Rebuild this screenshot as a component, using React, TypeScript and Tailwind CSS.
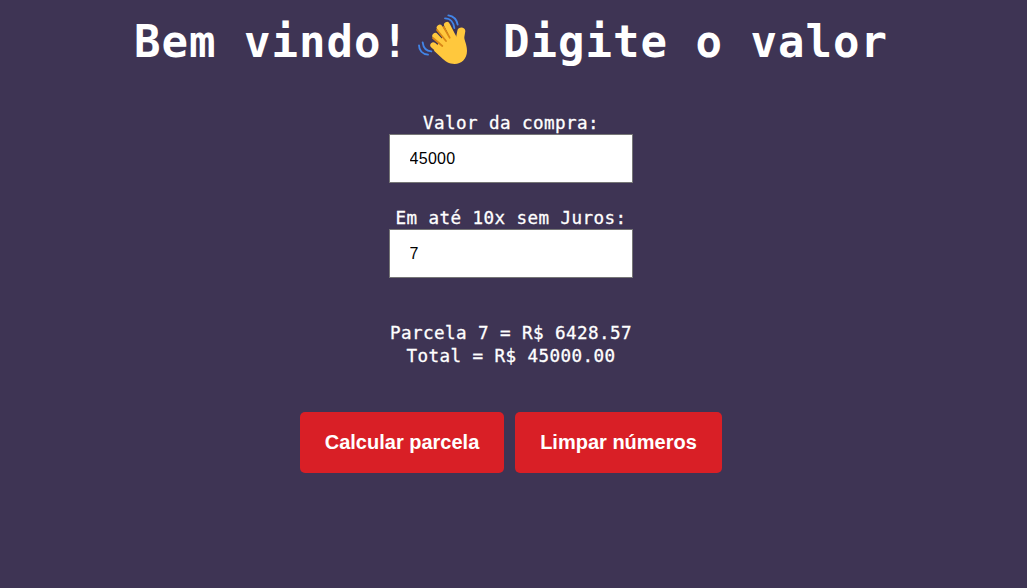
import { useState } from "react";

function WavingHand() {
  return (
    <svg
      viewBox="0 0 195 192"
      className="ml-[0.5px] mr-px h-16 w-[65px] shrink-0"
      fill="none"
      strokeLinecap="round"
      strokeLinejoin="round"
      aria-hidden="true"
    >
      <g stroke="#4285e8" strokeWidth="5.5">
        <path d="M115 22C129 24 140 33 143 50" />
        <path d="M105 31C121 31 131 43 133 60" />
        <path d="M27 112C27 127 37 139 54 140" />
        <path d="M38 103C40 120 49 129 64 130" />
      </g>
      <g stroke="#ffc83d" strokeWidth="18">
        <path d="M111 51L132 92" />
        <path d="M89 59L120 105" />
        <path d="M76 84L110 120" />
        <path d="M70 112L102 140" />
      </g>
      <path
        d="M100 84L126 74L138 89L142 68C144 55 166 55 166 69L163 87C162 97 171 108 171 128C171 153 154 167 134 168C117 168 106 161 93 148L72 128L84 108Z"
        fill="#ffc83d"
      />
      <g stroke="#d98716" strokeWidth="5.5">
        <path d="M101 57L119 89" />
        <path d="M81 66L108 99" />
        <path d="M69 90L97 114" />
      </g>
    </svg>
  );
}

function Field({
  id,
  label,
  value,
  onChange,
}: {
  id: string;
  label: string;
  value: string;
  onChange: (value: string) => void;
}) {
  return (
    <div className="flex flex-col items-center">
      <label
        htmlFor={id}
        className="h-[22px] leading-[23px] [-webkit-text-stroke:0.3px_white]"
      >
        {label}
      </label>
      <input
        id={id}
        value={value}
        onChange={(e) => onChange(e.target.value)}
        className="h-[49px] w-[244px] border border-[#767676] bg-white px-[19.5px] font-['Liberation_Sans',sans-serif] text-base tracking-[0.3px] text-black outline-none"
      />
    </div>
  );
}

const buttonClass =
  "h-[61px] rounded-[5px] bg-[#d91f26] pb-0.5 font-['Liberation_Sans',sans-serif] text-[20px] font-bold tracking-normal text-white";

export default function App() {
  const [valor, setValor] = useState("45000");
  const [parcelas, setParcelas] = useState("7");
  const [result, setResult] = useState<string[]>([
    "Parcela 7 = R$ 6428.57",
    "Total = R$ 45000.00",
  ]);

  const calcular = () => {
    const total = Number(valor);
    const n = Number(parcelas);
    if (!total || !n) return;
    setResult([
      `Parcela ${n} = R$ ${(total / n).toFixed(2)}`,
      `Total = R$ ${total.toFixed(2)}`,
    ]);
  };

  const limpar = () => {
    setValor("");
    setParcelas("");
    setResult([]);
  };

  return (
    <main className="flex min-h-screen flex-col items-center bg-[#3e3454] pr-[5px] font-['DejaVu_Sans_Mono',monospace] text-[17.6px] tracking-[0.405px] text-white">
      <h1 className="flex h-[72px] items-end text-[44px] font-bold leading-[60px] tracking-[1.01px] whitespace-pre">
        <span>Bem vindo!</span>
        <WavingHand />
        <span> Digite o valor</span>
      </h1>
      <section className="mt-10 flex flex-col gap-6">
        <Field id="valor" label="Valor da compra:" value={valor} onChange={setValor} />
        <Field id="parcelas" label="Em até 10x sem Juros:" value={parcelas} onChange={setParcelas} />
      </section>
      <div className="mt-11 h-[46px] text-center leading-[23px] [-webkit-text-stroke:0.3px_white]">
        {result.map((line) => (
          <p key={line}>{line}</p>
        ))}
      </div>
      <div className="mt-[44px] flex gap-[11px]">
        <button onClick={calcular} className={`${buttonClass} w-[204px]`}>
          Calcular parcela
        </button>
        <button onClick={limpar} className={`${buttonClass} w-[207px]`}>
          Limpar números
        </button>
      </div>
    </main>
  );
}
